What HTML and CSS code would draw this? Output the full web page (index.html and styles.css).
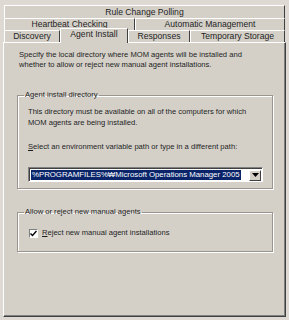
FILE: index.html
```html
<!DOCTYPE html>
<html lang="en">
<head>
  <meta charset="UTF-8" />
  <title>Agent Install</title>
  <link rel="stylesheet" href="styles.css">
</head>
<body>
  <div class="dialog">
    <!-- tab strip, three rows -->
    <div class="tabs">
      <div class="tab-row row-top">
        <div class="tab t-rule">Rule Change Polling</div>
      </div>
      <div class="tab-row row-mid">
        <div class="tab t-heart">Heartbeat Checking</div>
        <div class="tab t-auto">Automatic Management</div>
      </div>
      <div class="tab-row row-front">
        <div class="tab t-disc">Discovery</div>
        <div class="tab t-agent active">Agent Install</div>
        <div class="tab t-resp">Responses</div>
        <div class="tab t-temp">Temporary Storage</div>
      </div>
    </div>

    <div class="panel">
      <p class="intro">Specify the local directory where MOM agents will be installed and<br>whether to allow or reject new manual agent installations.</p>

      <fieldset class="group g-dir">
        <legend>Agent install directory</legend>
        <p class="note">This directory must be available on all of the computers for which<br>MOM agents are being installed.</p>
        <p class="select-label"><u>S</u>elect an environment variable path or type in a different path:</p>
        <div class="combo">
          <div class="combo-value"><span class="sel">%PROGRAMFILES%₩Microsoft Operations Manager 2005</span></div>
          <div class="combo-btn">
            <svg width="7" height="4" viewBox="0 0 7 4"><path d="M0 0h7L3.5 4z" fill="#000"/></svg>
          </div>
        </div>
      </fieldset>

      <fieldset class="group g-allow">
        <legend>Allow or reject new manual agents</legend>
        <label class="check">
          <span class="box">
            <svg width="7" height="7" viewBox="0 0 7 7"><path d="M0.5 3.5l2 2 4-4.5" fill="none" stroke="#000" stroke-width="1.4"/></svg>
          </span>
          <span><u>R</u>eject new manual agent installations</span>
        </label>
      </fieldset>
    </div>
  </div>
</body>
</html>
```

FILE: styles.css
```css
body {
  margin: 0;
  background: #dedad3;
  font-family: "Liberation Sans", Arial, sans-serif;
  color: #1e1e1e;
}
.dialog {
  width: 289px;
  height: 320px;
  padding: 5px 3px 0 3px;
  box-sizing: border-box;
}
.tabs {
  padding: 0 0 0 1px;
}
.tab-row {
  display: flex;
  align-items: flex-end;
}
.tab {
  box-sizing: border-box;
  background: #d4d0c8;
  border-top: 1px solid #fff;
  border-left: 1px solid #fff;
  border-right: 1px solid #404040;
  font-size: 8.6px;
  text-align: center;
  white-space: nowrap;
}
.row-top .tab { height: 13px; line-height: 12px; }
.row-mid .tab { height: 12px; line-height: 10px; }
.row-front .tab { height: 12px; line-height: 11px; }
.t-rule { width: 281px; }
.t-heart { width: 131px; }
.t-auto { width: 150px; }
.t-disc { width: 56px; }
.t-agent { width: 68px; }
.t-resp { width: 62px; }
.t-temp { width: 95px; }
.row-front .tab.active {
  height: 15px;
  margin-top: -2px;
  margin-bottom: -1px;
  padding-bottom: 2px;
  line-height: 11px;
  position: relative;
  z-index: 1;
}

.panel {
  height: 275px;
  box-sizing: border-box;
  background: #d4d0c8;
  border-top: 1px solid #fff;
  border-left: 1px solid #fff;
  border-right: 1px solid #404040;
  border-bottom: 1px solid #404040;
  box-shadow: inset -1px -1px 0 #808080;
  padding: 7px 0 0 15px;
  font-size: 7.6px;
}
.intro {
  margin: 0;
  line-height: 10px;
}

.group {
  margin: 20px 0 0 -2px;
  width: 256px;
  box-sizing: border-box;
  border: 1px solid #9a968f;
  box-shadow: inset 1px 1px 0 #fff, 1px 1px 0 #fff;
  padding: 0 0 0 10px;
}
.group legend {
  padding: 0 1px;
  margin-left: -4px;
  line-height: 10px;
}
.group p {
  margin: 0;
}
.note {
  padding-top: 6px;
  line-height: 11px;
}
.select-label {
  margin-top: 14px !important;
  line-height: 10px;
}
.g-dir {
  height: 99px;
}

.combo {
  display: flex;
  align-items: center;
  width: 235px;
  height: 15px;
  margin: 15px 0 0 0;
  box-sizing: border-box;
  background: #fff;
  border-top: 1px solid #808080;
  border-left: 1px solid #808080;
  border-right: 1px solid #fff;
  border-bottom: 1px solid #fff;
  box-shadow: inset 1px 1px 0 #404040;
  padding: 1px 1px 0 2px;
}
.combo-value {
  flex: 1;
  font-size: 7.8px;
  line-height: 10px;
  white-space: nowrap;
  overflow: hidden;
}
.sel {
  display: inline-block;
  background: #0a246a;
  color: #fff;
  padding: 0 1px;
}
.combo-btn {
  width: 12px;
  height: 11px;
  box-sizing: border-box;
  background: #d4d0c8;
  border-top: 1px solid #fff;
  border-left: 1px solid #fff;
  border-right: 1px solid #404040;
  border-bottom: 1px solid #404040;
  display: flex;
  align-items: center;
  justify-content: center;
}

.g-allow {
  margin-top: 18px;
  height: 45px;
}
.check {
  display: flex;
  align-items: center;
  gap: 4px;
  margin: 11px 0 0 1px;
  line-height: 10px;
}
.box {
  width: 9px;
  height: 9px;
  box-sizing: border-box;
  background: #fff;
  border-top: 1px solid #808080;
  border-left: 1px solid #808080;
  border-right: 1px solid #fff;
  border-bottom: 1px solid #fff;
  display: flex;
  align-items: center;
  justify-content: center;
}
```
